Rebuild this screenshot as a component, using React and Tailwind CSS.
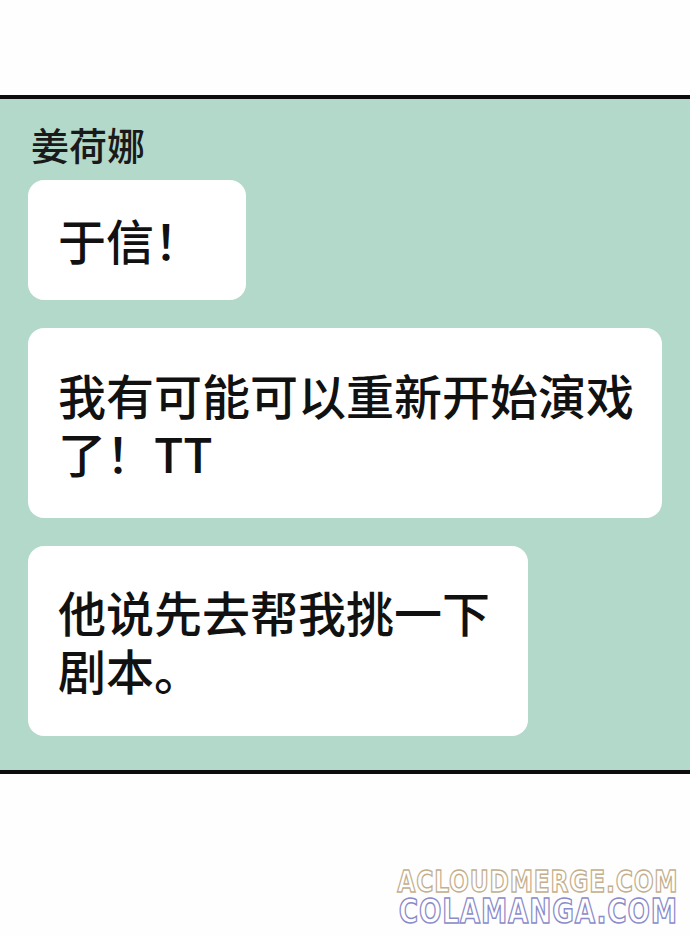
const CJK = "font-['Noto_Sans_CJK_SC','Noto_Sans',sans-serif]"

const messages = [
  { id: 1, width: 'w-[218px]', pad: 'pt-[30px] pb-[32px]', lines: ['于信！'] },
  { id: 2, width: 'w-[634px]', pad: 'pt-[37px] pb-[37px]', lines: ['我有可能可以重新开始演戏', '了！TT'] },
  { id: 3, width: 'w-[500px]', pad: 'pt-[36px] pb-[38px]', lines: ['他说先去帮我挑一下', '剧本。'] },
]

function Bubble({ msg }) {
  return (
    <div className={`${msg.width} ${msg.pad} bg-white rounded-[16px] pl-[30px] pr-4`}>
      <p className="text-[48px] leading-[58px] font-medium text-[#111] whitespace-nowrap">
        {msg.lines.map((line, i) => (
          <span key={i}>
            {i > 0 && <br />}
            {line}
          </span>
        ))}
      </p>
    </div>
  )
}

export default function App() {
  return (
    <div className={`${CJK} w-[690px] h-[936px] bg-[#fefefe] flex flex-col overflow-hidden`}>
      <div className="h-[95px] shrink-0" />

      <div className="border-y-4 border-[#0d0d0d] bg-[#b3d9ca] pl-[28px] pt-[25px] pb-[34px] shrink-0">
        <div className="text-[38px] leading-[40px] font-medium text-[#1a1a1a] pl-[3px] mb-4">姜荷娜</div>
        <div className="flex flex-col gap-[28px]">
          {messages.map(m => (
            <Bubble key={m.id} msg={m} />
          ))}
        </div>
      </div>

      {/* watermark */}
      <div className="flex-1 flex flex-col items-end pt-[94px] pr-[12px]">
        <div className="font-['DejaVu_Sans',sans-serif] font-bold text-[30px] leading-[28px] tracking-[1px] text-white [-webkit-text-stroke:1.5px_#c3af8d] [transform:scaleX(0.78)] origin-right">
          ACLOUDMERGE.COM
        </div>
        <div className="font-['DejaVu_Sans',sans-serif] font-bold text-[33px] leading-[32px] tracking-[1px] text-white [-webkit-text-stroke:1.5px_#8b8bc9] [transform:scaleX(0.8)] origin-right">
          COLAMANGA.COM
        </div>
      </div>
    </div>
  )
}
